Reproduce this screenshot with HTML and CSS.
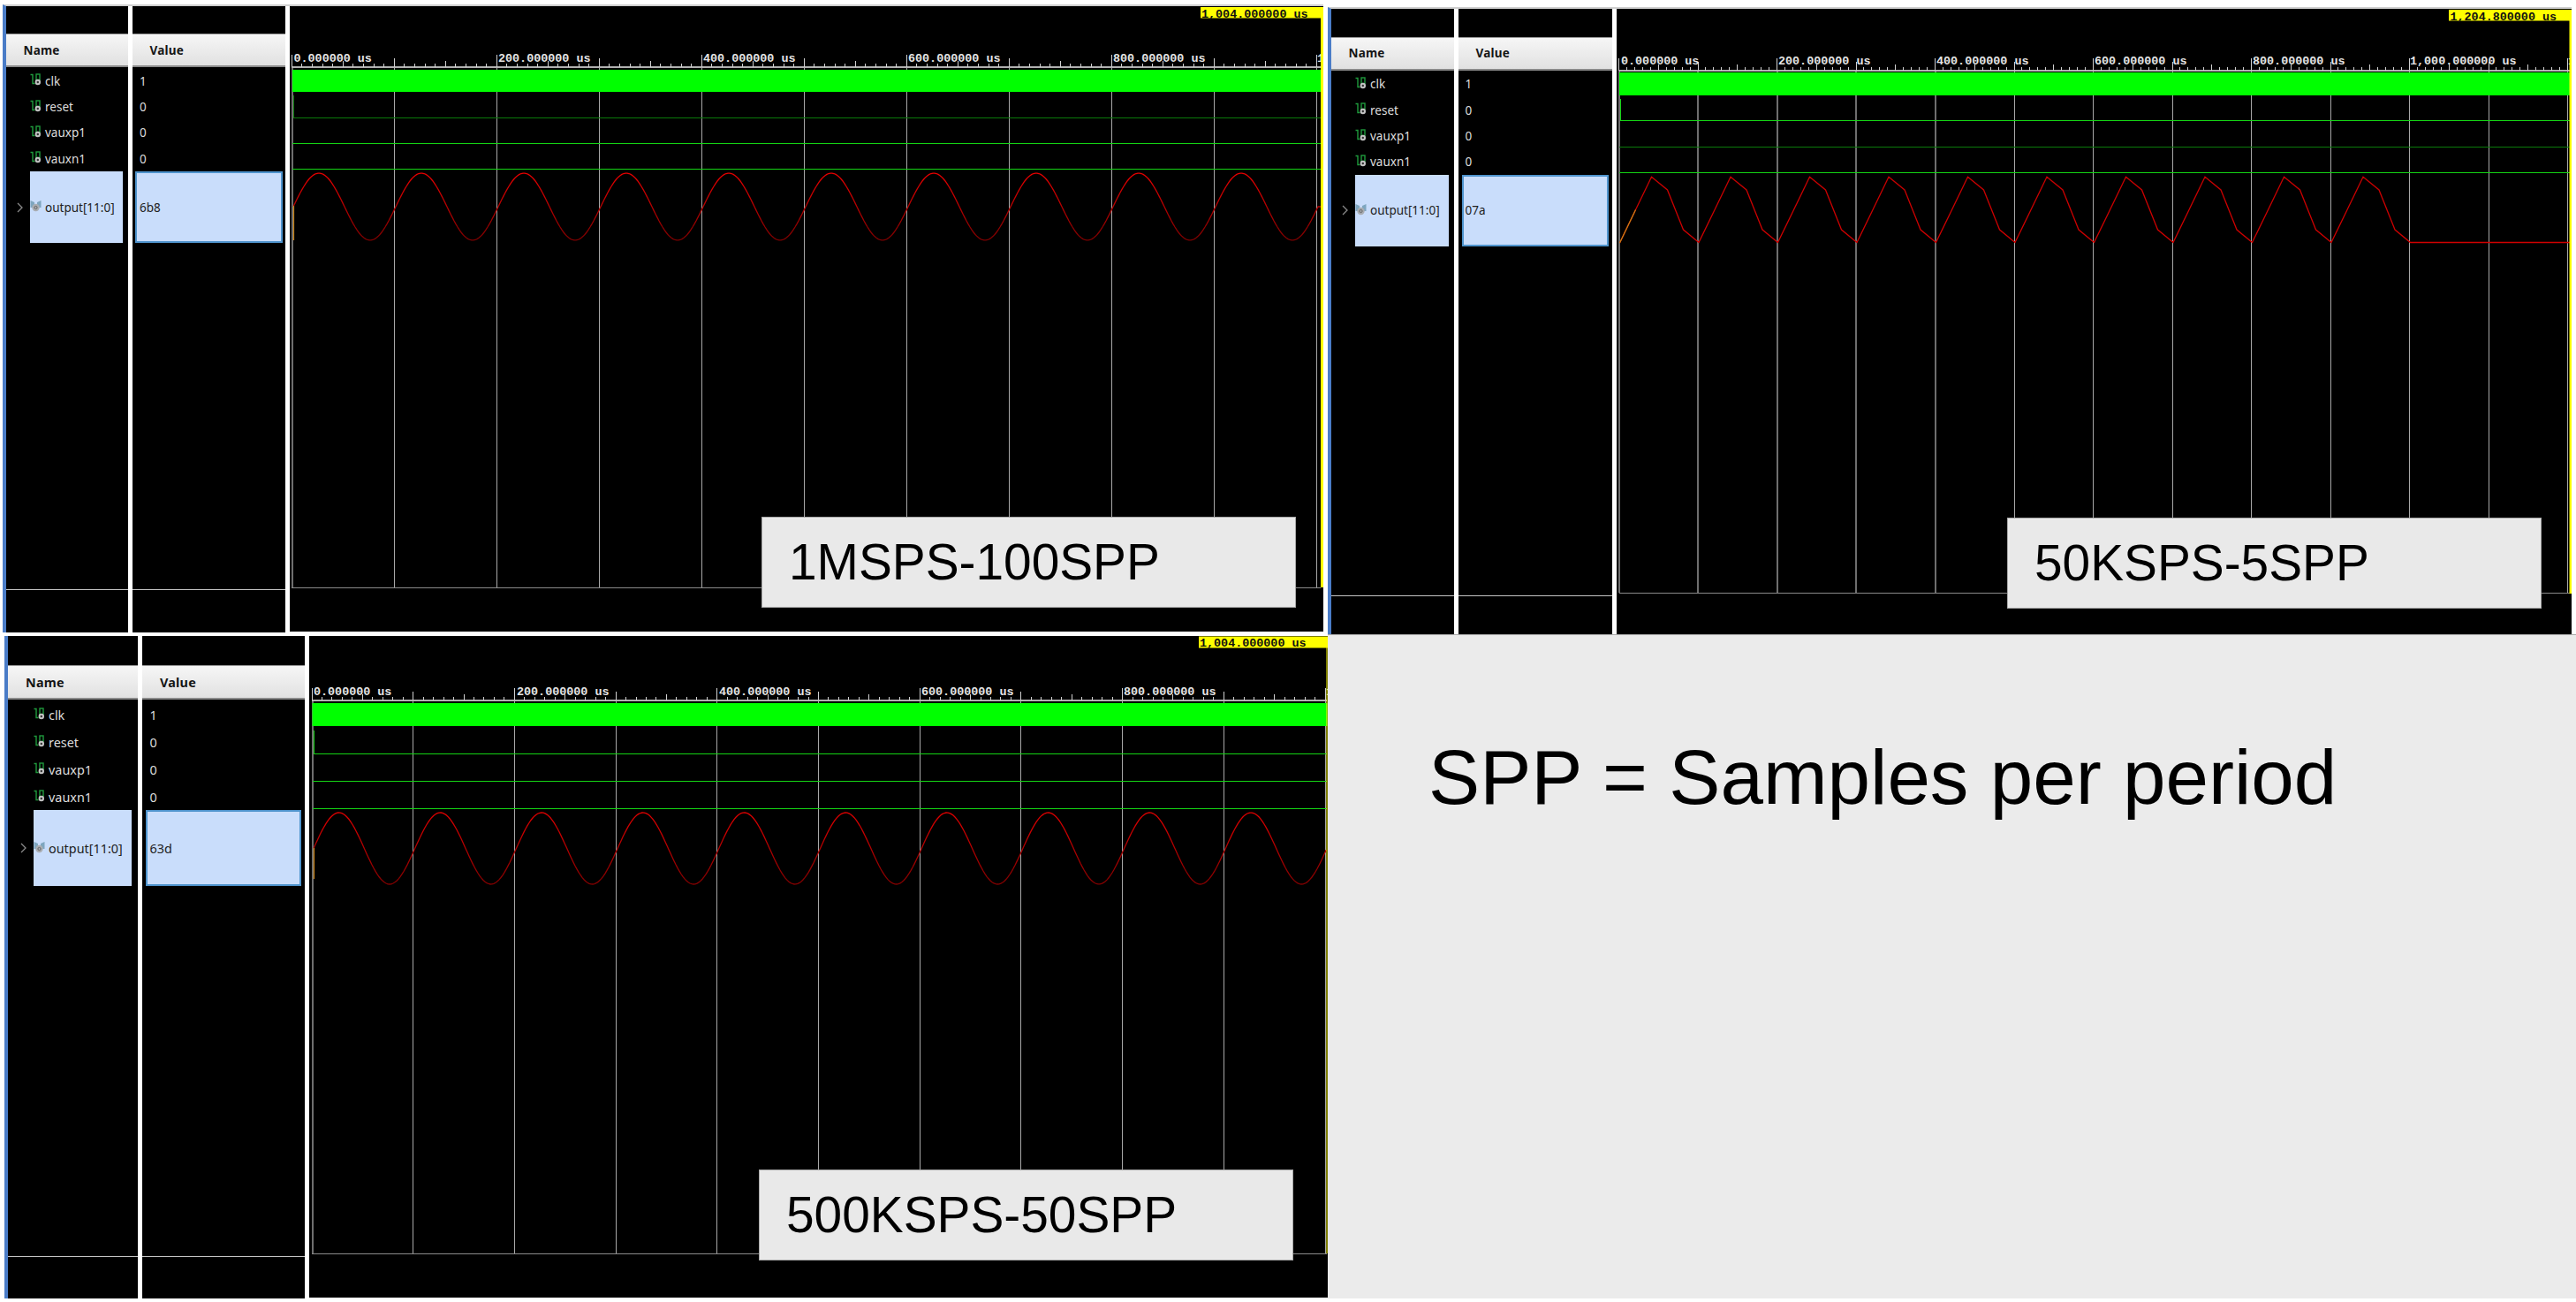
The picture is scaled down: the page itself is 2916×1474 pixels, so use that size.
FILE: index.html
```html
<!DOCTYPE html>
<html lang="en">
<head>
<meta charset="utf-8">
<title>XADC simulation results</title>
<link rel="stylesheet" href="styles.css">
</head>
<body>
<svg class="defs" width="0" height="0" aria-hidden="true">
  <symbol id="bit" viewBox="0 0 13 14">
    <path d="M0.5 1.5H3V11.5H5.5" fill="none" stroke="#1f9a3c" stroke-width="1.4"/>
    <rect x="7" y="1" width="4" height="6.5" fill="none" stroke="#1f9a3c" stroke-width="1.4"/>
    <circle cx="8.8" cy="10" r="3.2" fill="#c4c4c4"/>
    <circle cx="8.8" cy="10" r="1.2" fill="#333"/>
  </symbol>
  <symbol id="bus" viewBox="0 0 13 14">
    <path d="M0.5 1L5 3V9H0.5ZM12.5 1L8 3V9H12.5Z" fill="#7ea6bf"/>
    <circle cx="6.5" cy="9" r="4.2" fill="#a9adb2"/>
    <circle cx="6.5" cy="9" r="1.6" fill="none" stroke="#666" stroke-width="1"/>
  </symbol>
  <symbol id="chev" viewBox="0 0 7 12">
    <path d="M1 1L6 6L1 11" fill="none" stroke="#8a8a8a" stroke-width="1.3"/>
  </symbol>
  <linearGradient id="red-top-1" gradientUnits="userSpaceOnUse" x1="0" y1="196" x2="0" y2="272"><stop offset="0" stop-color="#e80000"/><stop offset="1" stop-color="#7a0000"/></linearGradient>
  <linearGradient id="red-top-2" gradientUnits="userSpaceOnUse" x1="0" y1="200" x2="0" y2="275"><stop offset="0" stop-color="#c80000"/><stop offset="1" stop-color="#d00000"/></linearGradient>
  <linearGradient id="red-top-3" gradientUnits="userSpaceOnUse" x1="0" y1="920" x2="0" y2="1001"><stop offset="0" stop-color="#e00000"/><stop offset="1" stop-color="#800000"/></linearGradient>
</svg>

<main class="sheet">
  <section class="cell cell-a">
    <div class="panel p1">
      <div class="col name-col">
        <div class="hdr">Name</div>
        <div class="rows">
          <div class="row"><svg class="ico"><use href="#bit"/></svg><span>clk</span></div>
          <div class="row"><svg class="ico"><use href="#bit"/></svg><span>reset</span></div>
          <div class="row"><svg class="ico"><use href="#bit"/></svg><span>vauxp1</span></div>
          <div class="row"><svg class="ico"><use href="#bit"/></svg><span>vauxn1</span></div>
          <div class="sel-row"><div class="twist"><svg class="chev"><use href="#chev"/></svg></div><div class="sel"><svg class="ico"><use href="#bus"/></svg><span>output[11:0]</span></div></div>
        </div>
        <div class="foot"></div>
      </div>
      <div class="col value-col">
        <div class="hdr">Value</div>
        <div class="rows">
          <div class="row">1</div>
          <div class="row">0</div>
          <div class="row">0</div>
          <div class="row">0</div>
          <div class="sel-val">6b8</div>
        </div>
        <div class="foot"></div>
      </div>
      <svg class="trace" width="1170" height="708" viewBox="328 7 1170 708" data-x0="330.3" data-step="116" data-right="1495" data-ruler="76" data-top="79" data-bottom="665" data-kind="sine" data-phase="332" data-mid="234" data-amp="38" data-bar="104">
        <g class="grid"></g>
        <g class="ticks"></g>
        <text class="tm" x="332.5" y="70">0.000000 us</text>
        <text class="tm" x="564" y="70">200.000000 us</text>
        <text class="tm" x="796" y="70">400.000000 us</text>
        <text class="tm" x="1028" y="70">600.000000 us</text>
        <text class="tm" x="1260" y="70">800.000000 us</text>
        <text class="tm" x="1491" y="70">1</text>
        <rect class="bar" x="331" y="79" width="1164" height="25"/>
        <path class="lvl dim" d="M332 108V133H1495"/>
        <path class="lvl" d="M331 162.5H1495"/>
        <path class="lvl" d="M331 191.5H1495"/>
        <path class="wave" stroke="url(#red-top-1)"/>
        <path class="start" d="M332.5 233V272"/>
        <path class="cursor" d="M1496.5 20V665"/>
        <rect class="flag" x="1359" y="8" width="139" height="12.5"/>
        <text class="flag-t" x="1360" y="19.5">1,004.000000 us</text>
      </svg>
      <div class="tag tag-1">1MSPS-100SPP</div>
    </div>

    <div class="panel p2">
      <div class="col name-col">
        <div class="hdr">Name</div>
        <div class="rows">
          <div class="row"><svg class="ico"><use href="#bit"/></svg><span>clk</span></div>
          <div class="row"><svg class="ico"><use href="#bit"/></svg><span>reset</span></div>
          <div class="row"><svg class="ico"><use href="#bit"/></svg><span>vauxp1</span></div>
          <div class="row"><svg class="ico"><use href="#bit"/></svg><span>vauxn1</span></div>
          <div class="sel-row"><div class="twist"><svg class="chev"><use href="#chev"/></svg></div><div class="sel"><svg class="ico"><use href="#bus"/></svg><span>output[11:0]</span></div></div>
        </div>
        <div class="foot"></div>
      </div>
      <div class="col value-col">
        <div class="hdr">Value</div>
        <div class="rows">
          <div class="row">1</div>
          <div class="row">0</div>
          <div class="row">0</div>
          <div class="row">0</div>
          <div class="sel-val">07a</div>
        </div>
        <div class="foot"></div>
      </div>
      <svg class="trace" width="1081" height="708" viewBox="1830 10 1081 708" data-x0="1832.5" data-step="89.5" data-right="2909" data-ruler="80" data-top="82" data-bottom="671" data-kind="tri" data-phase="1833.5" data-bar="108" data-heavy="4">
        <g class="grid"></g>
        <g class="ticks"></g>
        <text class="tm" x="1835" y="73">0.000000 us</text>
        <text class="tm" x="2013" y="73">200.000000 us</text>
        <text class="tm" x="2192" y="73">400.000000 us</text>
        <text class="tm" x="2371" y="73">600.000000 us</text>
        <text class="tm" x="2550" y="73">800.000000 us</text>
        <text class="tm" x="2728" y="73">1,000.000000 us</text>
        <text class="tm" x="2907" y="73">1</text>
        <rect class="bar" x="1833" y="82" width="1076" height="26"/>
        <path class="lvl" d="M1834 112V136.5H2909"/>
        <path class="lvl dim" d="M1833 166H2909"/>
        <path class="lvl" d="M1833 195.5H2909"/>
        <path class="wave" stroke="url(#red-top-2)"/>
        <path class="start" d="M1833.5 275L1851.5 237.5"/>
        <path class="cursor" d="M2910 23V672"/>
        <rect class="flag" x="2772" y="11" width="139" height="12.5"/>
        <text class="flag-t" x="2773.5" y="22.5">1,204.800000 us</text>
      </svg>
      <div class="tag tag-2">50KSPS-5SPP</div>
    </div>
  </section>

  <section class="cell cell-b">
    <div class="panel p3">
      <div class="col name-col">
        <div class="hdr">Name</div>
        <div class="rows">
          <div class="row"><svg class="ico"><use href="#bit"/></svg><span>clk</span></div>
          <div class="row"><svg class="ico"><use href="#bit"/></svg><span>reset</span></div>
          <div class="row"><svg class="ico"><use href="#bit"/></svg><span>vauxp1</span></div>
          <div class="row"><svg class="ico"><use href="#bit"/></svg><span>vauxn1</span></div>
          <div class="sel-row"><div class="twist"><svg class="chev"><use href="#chev"/></svg></div><div class="sel"><svg class="ico"><use href="#bus"/></svg><span>output[11:0]</span></div></div>
        </div>
        <div class="foot"></div>
      </div>
      <div class="col value-col">
        <div class="hdr">Value</div>
        <div class="rows">
          <div class="row">1</div>
          <div class="row">0</div>
          <div class="row">0</div>
          <div class="row">0</div>
          <div class="sel-val">63d</div>
        </div>
        <div class="foot"></div>
      </div>
      <svg class="trace" width="1153" height="749" viewBox="350 720 1153 749" data-x0="353" data-step="114.7" data-right="1502" data-ruler="793" data-top="796" data-bottom="1419" data-kind="sine" data-phase="355" data-mid="960.5" data-amp="40.5" data-bar="822">
        <g class="grid"></g>
        <g class="ticks"></g>
        <text class="tm" x="355" y="786.5">0.000000 us</text>
        <text class="tm" x="585" y="786.5">200.000000 us</text>
        <text class="tm" x="814" y="786.5">400.000000 us</text>
        <text class="tm" x="1043" y="786.5">600.000000 us</text>
        <text class="tm" x="1272" y="786.5">800.000000 us</text>
        <text class="tm" x="1501" y="786.5">1</text>
        <rect class="bar" x="353.5" y="796" width="1149" height="26"/>
        <path class="lvl" d="M355 827V853H1502"/>
        <path class="lvl" d="M354 884H1502"/>
        <path class="lvl" d="M354 915H1502"/>
        <path class="wave" stroke="url(#red-top-3)"/>
        <path class="start" d="M355.5 960V995"/>
        <path class="cursor thin" d="M1502 733V1419"/>
        <rect class="flag" x="1357" y="720.5" width="146" height="13"/>
        <text class="flag-t" x="1358" y="732">1,004.000000 us</text>
      </svg>
      <div class="tag tag-3">500KSPS-50SPP</div>
    </div>
  </section>

  <section class="cell cell-c">
    <p class="note">SPP = Samples per period</p>
  </section>
</main>
<script src="script.js"></script>
</body>
</html>
```
FILE: styles.css
```css
* { box-sizing: border-box; }
html, body { margin: 0; padding: 0; background: #fff; }
body { width: 2916px; height: 1474px; overflow: hidden; font-family: "Noto Sans", "Liberation Sans", sans-serif; }
.defs { position: absolute; }

.sheet {
  display: grid;
  grid-template-columns: 1503px 1413px;
  grid-template-rows: 718px 751.5px;
}
.cell-a { grid-column: 1 / 3; display: flex; align-items: flex-start; padding-left: 3px; gap: 5px; }
.cell-b { padding: 2px 0 0 5px; }
.cell-c { background: #ebebeb; padding: 111px 0 0 114px; border-top: 1px solid #aaa; }
.note { margin: 0; font: 87.2px/1.15 "Liberation Sans", Arial, sans-serif; color: #000; }

.panel { position: relative; display: flex; gap: 5px; border-left: 4px solid #4a7cc7; }
.p1 { --name-w: 138px; --val-w: 173px; --hdr-top: 31px; --hdr-h: 38px; --row: 29.2px; --rows-pad: 1.4px; --sel-h: 81px; --sel-x: 27px; --sel-r: 6px; --val-x: 8px; --val-m: 3px; --hdr-x: 19.5px; --fs: 13.5px; --foot: 49px; --sel-gap: 0px; height: 711px; margin-top: 5px; border-top: 2px solid #cfcfcf; }
.p2 { --name-w: 139px; --val-w: 174px; --hdr-top: 32px; --hdr-h: 37.5px; --row: 29.3px; --rows-pad: 1.3px; --sel-h: 81px; --sel-x: 27px; --sel-r: 6px; --val-x: 7.5px; --val-m: 4px; --hdr-x: 19.5px; --fs: 13.5px; --foot: 44px; --sel-gap: 0px; height: 710px; margin-top: 8px; border-top: 2px solid #cfcfcf; }
.p3 { --name-w: 147px; --val-w: 184px; --hdr-top: 33px; --hdr-h: 39px; --row: 31px; --rows-pad: 2px; --sel-h: 86px; --sel-x: 29px; --sel-r: 7px; --val-x: 8.5px; --val-m: 4px; --hdr-x: 20px; --fs: 14.4px; --foot: 48px; --sel-gap: -1px; height: 749.5px; }

.col { display: flex; flex-direction: column; background: #000; padding-top: var(--hdr-top); color: #ddd; font-size: var(--fs); }
.name-col { width: var(--name-w); }
.value-col { width: var(--val-w); }
.hdr {
  height: var(--hdr-h);
  display: flex;
  align-items: center;
  padding-left: var(--hdr-x);
  font-weight: 700;
  letter-spacing: 0.2px;
  color: #151515;
  background: linear-gradient(#f6f6f6, #e1e1e1);
  border-top: 1px solid #9a9a9a;
  border-bottom: 2px solid #8a8a8a;
}
.rows { display: flex; flex-direction: column; padding-top: var(--rows-pad); }
.row { height: var(--row); display: flex; align-items: center; flex: none; white-space: nowrap; }
.name-col .row { padding-left: var(--sel-x); }
.value-col .row { padding-left: var(--val-x); }
.foot { margin-top: auto; height: var(--foot); border-top: 1px solid #c4c4c4; }

.ico { width: 13px; height: 14px; flex: none; margin: -3px 4px 0 0; }
.sel-row { display: flex; height: var(--sel-h); margin-top: var(--sel-gap); }
.twist { width: var(--sel-x); flex: none; display: flex; align-items: center; justify-content: flex-end; padding-right: 8px; }
.chev { width: 7px; height: 12px; }
.sel { flex: 1; margin-right: var(--sel-r); display: flex; align-items: center; background: #c9ddfb; color: #222; white-space: nowrap; }
.sel-val {
  height: var(--sel-h);
  margin: var(--sel-gap) var(--val-m) 0;
  display: flex;
  align-items: center;
  padding-left: calc(var(--val-x) - var(--val-m) - 2px);
  background: #c9ddfb;
  color: #222;
  border: 2px solid #4f94cd;
}

.trace { display: block; background: #000; flex: none; }
.grid line { stroke: #a8a8a8; stroke-width: 1; shape-rendering: crispEdges; }
.grid line.heavy { stroke: #6e6e6e; stroke-width: 2; }
.grid line.edge { stroke: #6e6e6e; stroke-width: 2; }
.grid line.base { stroke: #8a8a8a; stroke-width: 1; }
.ticks line { stroke: #d0d0d0; stroke-width: 1; shape-rendering: crispEdges; }
.ticks line.ruler { stroke: #b0b0b0; stroke-width: 2; }
.tm { font: 13.4px "Liberation Mono", monospace; font-weight: 700; fill: #e4e4e4; }
.bar { fill: #00ff00; }
.lvl { fill: none; stroke: #14d414; stroke-width: 1; shape-rendering: crispEdges; }
.lvl.dim { stroke: #0a7a0a; }
.wave { fill: none; stroke-width: 1.3; }
.start { fill: none; stroke: #c98214; stroke-width: 1.2; }
.cursor { fill: none; stroke: #ffff00; stroke-width: 3; }
.cursor.thin { stroke-width: 1; }
.flag { fill: #ffff00; }
.flag-t { font: 700 13.4px "Liberation Mono", monospace; fill: #111; }

.tag {
  position: absolute;
  display: flex;
  align-items: center;
  width: 605px;
  height: 103px;
  padding-left: 30px;
  background: #e9e9e9;
  border: 1px solid #a9a9a9;
  color: #000;
  font: 56.8px "Liberation Sans", Arial, sans-serif;
}
.tag-1 { left: 855px; top: 578px; }
.tag-2 { left: 765px; top: 576px; }
.tag-3 { left: 850px; top: 604px; }
```
FILE: script.js
```js
// Builds the ruler ticks, grid lines and analog traces from each trace's parameters.
const NS = "http://www.w3.org/2000/svg";

function addLine(parent, x1, y1, x2, y2, cls) {
  const l = document.createElementNS(NS, "line");
  l.setAttribute("x1", x1);
  l.setAttribute("y1", y1);
  l.setAttribute("x2", x2);
  l.setAttribute("y2", y2);
  if (cls) l.setAttribute("class", cls);
  parent.appendChild(l);
}

function sinePath(d) {
  const end = d.phase + d.step * 10;
  let p = "";
  for (let x = d.phase; x <= end; x += 2) {
    const y = d.mid - d.amp * Math.sin((2 * Math.PI * (x - d.phase)) / d.step);
    p += (p ? "L" : "M") + x.toFixed(1) + " " + y.toFixed(1);
  }
  return p + "H" + d.right;
}

function triPath(d) {
  const pts = [[18, 237.5], [36, 200.3], [54, 215], [72, 260], [89.5, 274.5]];
  let p = "M" + d.phase + " 275";
  for (let k = 0; k < 10; k++) {
    for (const [dx, y] of pts) p += "L" + (d.phase + k * d.step + dx).toFixed(1) + " " + y;
  }
  return p + "H" + d.right;
}

document.querySelectorAll(".trace").forEach((svg) => {
  const s = svg.dataset;
  const d = {
    x0: +s.x0, step: +s.step, right: +s.right, ruler: +s.ruler, bottom: +s.bottom,
    bar: +s.bar, phase: +s.phase, mid: +s.mid, amp: +s.amp, heavy: +(s.heavy || 0)
  };
  const grid = svg.querySelector(".grid");
  const ticks = svg.querySelector(".ticks");

  for (let k = 1; d.x0 + k * d.step <= d.right; k++) {
    const x = d.x0 + k * d.step;
    addLine(grid, x, d.ruler, x, d.bottom, k <= d.heavy ? "heavy" : "");
  }
  addLine(grid, d.x0 + 0.5, d.ruler, d.x0 + 0.5, d.bottom, "edge");
  addLine(grid, d.x0, d.bottom, d.right, d.bottom, "base");

  addLine(ticks, d.x0, d.ruler, d.right, d.ruler, "ruler");
  const minor = d.step / 10;
  for (let k = 0; d.x0 + k * minor <= d.right; k++) {
    const x = d.x0 + k * minor;
    const h = k % 20 === 0 ? 14 : k % 10 === 0 ? 10 : k % 5 === 0 ? 7 : 4;
    addLine(ticks, x, d.ruler - h, x, d.ruler, "");
  }

  svg.querySelector(".wave").setAttribute("d", s.kind === "tri" ? triPath(d) : sinePath(d));
});
```
